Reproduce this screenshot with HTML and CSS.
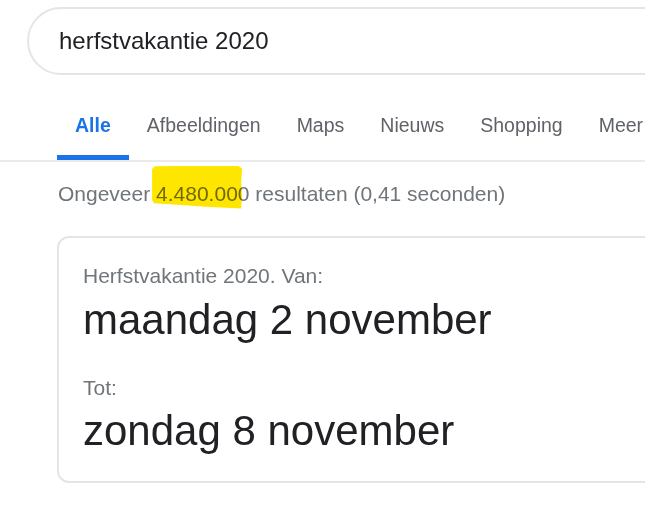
FILE: index.html
```html
<!DOCTYPE html>
<html lang="nl">
<head>
<meta charset="utf-8">
<title>herfstvakantie 2020</title>
<link rel="stylesheet" href="styles.css">
</head>
<body>
<div class="page">
  <div class="searchbox"><span class="query">herfstvakantie 2020</span></div>
  <nav class="tabs">
    <a class="tab active">Alle</a>
    <a class="tab">Afbeeldingen</a>
    <a class="tab">Maps</a>
    <a class="tab">Nieuws</a>
    <a class="tab">Shopping</a>
    <a class="tab">Meer</a>
  </nav>
  <div class="stats">Ongeveer <span class="mark">4.480.000</span> resultaten (0,41 seconden)</div>
  <div class="card">
    <div class="label">Herfstvakantie 2020. Van:</div>
    <div class="date">maandag 2 november</div>
    <div class="label label-second">Tot:</div>
    <div class="date date-second">zondag 8 november</div>
  </div>
</div>
</body>
</html>
```
FILE: styles.css
```css
html, body {
  margin: 0;
  padding: 0;
  background: #ffffff;
}
body {
  font-family: "Liberation Sans", Arial, sans-serif;
}
.page {
  width: 645px;
  height: 517px;
  overflow: hidden;
  padding-top: 7px;
  box-sizing: border-box;
}
.searchbox {
  margin-left: 27px;
  margin-right: -120px;
  height: 64px;
  border: 2px solid #e4e5e8;
  border-radius: 34px;
  display: flex;
  align-items: center;
  padding-left: 30px;
}
.query {
  font-size: 24px;
  color: #202124;
  line-height: normal;
}
.tabs {
  display: flex;
  padding-left: 57px;
  border-bottom: 2px solid #ebebeb;
  overflow: hidden;
}
.tab {
  font-size: 19.5px;
  line-height: 22px;
  color: #5f6368;
  padding: 39px 18px 19px;
  border-bottom: 5px solid transparent;
  white-space: nowrap;
}
.tab.active {
  color: #1a73e8;
  font-weight: bold;
  border-bottom-color: #1a73e8;
}
.stats {
  margin-top: 18px;
  padding-left: 58px;
  font-size: 21px;
  line-height: 27px;
  color: #70757a;
  white-space: nowrap;
}
.mark {
  position: relative;
}
.mark::after {
  content: "";
  position: absolute;
  left: -4px;
  top: -16.5px;
  width: 90px;
  height: 43px;
  background: #ffe600;
  mix-blend-mode: multiply;
  clip-path: polygon(0% 8%, 3% 2%, 30% 1%, 60% 0%, 96% 1%, 100% 7%, 99% 40%, 100% 70%, 99% 100%, 60% 96%, 20% 90%, 2% 88%, 0% 80%);
}
.card {
  margin-top: 29px;
  margin-left: 57px;
  margin-right: -120px;
  border: 2px solid #e4e5e8;
  border-radius: 12px;
  padding: 24px 24px 26.5px;
}
.label {
  font-size: 21px;
  line-height: 27px;
  color: #70757a;
}
.label-second {
  margin-top: 29.5px;
}
.date {
  font-size: 42px;
  line-height: 48px;
  color: #202124;
  margin-top: 7px;
}
.date-second {
  margin-top: 6px;
}
```
